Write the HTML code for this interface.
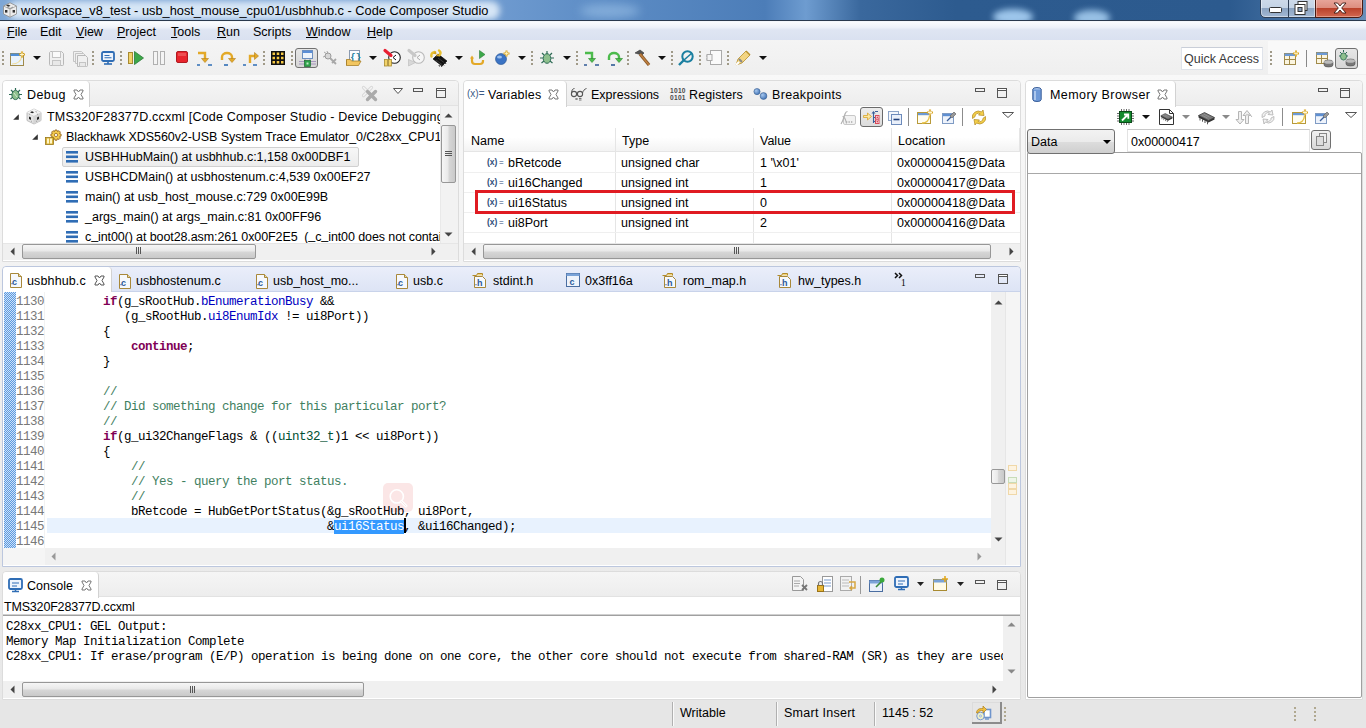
<!DOCTYPE html>
<html><head><meta charset="utf-8">
<style>
*{box-sizing:border-box}
html,body{margin:0;padding:0}
body{width:1366px;height:728px;overflow:hidden;position:relative;background:#f0f0f0;font-family:"Liberation Sans",sans-serif;font-size:12.5px;color:#000}
.a{position:absolute}
.t{position:absolute;white-space:pre;line-height:15px;margin-top:1px}
.m{font-family:"Liberation Mono",monospace;font-size:12.5px;letter-spacing:-.5px;margin-top:2px}
svg{position:absolute;overflow:visible}
.part{position:absolute;background:#fff;border:1px solid #dcdcdc;border-radius:4px 4px 0 0}
.part.act{border-color:#bcc7de}
.hdr{position:absolute;left:0;top:0;right:0;height:25px;background:linear-gradient(#f5f5f5,#ededed);border-bottom:1px solid #e2e2e2;border-radius:4px 4px 0 0}
.hdr.act{background:linear-gradient(#eaeefa,#dde4f5);border-bottom:1px solid #c9d3ea}
.tab{position:absolute;top:0;height:26px;background:#fff;border-right:1px solid #d2d2d2;border-radius:4px 4px 0 0}
.sb{position:absolute;background:#f0f0f0}
.thumb{position:absolute;background:linear-gradient(#f6f6f6 0%,#e9e9e9 45%,#d6d6d6 55%,#c9c9c9 100%);border:1px solid #979797;border-radius:2px}
</style></head><body>

<!-- TITLE BAR -->
<div class="a" style="left:0;top:0;width:1366px;height:20px;overflow:hidden;background:linear-gradient(90deg,#7ea7d6 0,#6f9bd0 36%,#5b8bc4 45%,#4c7db8 56%,#6e9cd0 59%,#3a689d 63%,#2d5b8f 70%,#2c5a8e 90%,#4f7aab 97%,#6a8fb9 100%)">
<div class="a" style="left:8px;top:1px;width:492px;height:19px;background:rgba(225,237,249,.9);border-radius:9px;filter:blur(3px)"></div>
<div class="a" style="left:993px;top:9px;width:40px;height:16px;background:rgba(170,210,245,.9);border-radius:50%;filter:blur(3px)"></div>
<div class="a" style="left:1074px;top:10px;width:36px;height:16px;background:rgba(170,210,245,.85);border-radius:50%;filter:blur(3px)"></div>
<div class="a" style="left:580px;top:4px;width:60px;height:14px;background:rgba(170,205,240,.5);border-radius:50%;filter:blur(5px)"></div>
</div>
<div class="a" style="left:0;top:20px;width:1366px;height:1px;background:#2b3a4e"></div>
<div class="a" style="left:0;top:21px;width:1366px;height:1px;background:#f4f7fb"></div>
<svg style="left:2px;top:2px" width="16" height="16" viewBox="0 0 16 16"><path d="M8 0.8l6.5 3.2v8l-6.5 3.2-6.5-3.2v-8z" fill="#ececec" stroke="#8a8a8a" stroke-width=".8"/><path d="M1.5 4l6.5 3.2 6.5-3.2M8 7.2v8" stroke="#a0a0a0" fill="none" stroke-width=".8"/><path d="M6 2.5l2.5 1.2-2 1-2.5-1.2z" fill="#333"/><rect x="3" y="8" width="2.4" height="2.6" fill="#333"/><rect x="10.6" y="8" width="2.4" height="2.6" fill="#333"/><path d="M5 5l3 1.5M11 5l-3 1.5" stroke="#666" stroke-width=".6"/></svg>
<div class="t" style="left:21px;top:2px;font-size:12.8px;color:#000">workspace_v8_test - usb_host_mouse_cpu01/usbhhub.c - Code Composer Studio</div>
<!-- window buttons -->
<div class="a" style="left:1260px;top:-3px;width:56px;height:21px;border:1px solid #2e3e54;border-radius:0 0 0 5px;background:linear-gradient(#cfdbea 0%,#c4d3e5 52%,#8aa2c0 53%,#a3b9d4 100%);box-shadow:inset 0 0 0 1px rgba(255,255,255,.45)"></div>
<div class="a" style="left:1288px;top:0;width:1px;height:17px;background:#2e3e54"></div>
<div class="a" style="left:1315px;top:-3px;width:48px;height:21px;border:1px solid #4a1a12;border-radius:0 0 5px 0;background:linear-gradient(#e9aaa0 0%,#dd8e80 50%,#b9402a 53%,#d26850 100%);box-shadow:inset 0 0 0 1px rgba(255,230,220,.4)"></div>
<svg style="left:1269px;top:7px" width="13" height="6" viewBox="0 0 13 6"><rect x="0.5" y="0.5" width="12" height="5" rx="1" fill="#fff" stroke="#333"/></svg>
<svg style="left:1294px;top:1px" width="14" height="14" viewBox="0 0 14 14"><rect x="4" y="0.5" width="9" height="9" fill="#fff" stroke="#333"/><rect x="1" y="3.5" width="10" height="10" fill="#fff" stroke="#333"/><rect x="4" y="6.5" width="4" height="4" fill="#8aa2c0" stroke="#333"/></svg>
<svg style="left:1333px;top:2px" width="14" height="12" viewBox="0 0 14 12"><path d="M1 1h3.5l2.5 3 2.5-3h3.5l-4.3 5 4.3 5h-3.5l-2.5-3-2.5 3h-3.5l4.3-5z" fill="#fff" stroke="#3a1a14" stroke-width=".9"/></svg>

<!-- MENU BAR -->
<div class="a" style="left:0;top:22px;width:1366px;height:19px;background:linear-gradient(#fbfcfe 0%,#eef2f9 30%,#dfe5f2 45%,#dae1f0 100%);border-bottom:1px solid #bcc5da"></div>
<div class="t" style="left:7px;top:24px"><u>F</u>ile</div>
<div class="t" style="left:40px;top:24px">Edit</div>
<div class="t" style="left:76px;top:24px"><u>V</u>iew</div>
<div class="t" style="left:117px;top:24px"><u>P</u>roject</div>
<div class="t" style="left:171px;top:24px"><u>T</u>ools</div>
<div class="t" style="left:217px;top:24px"><u>R</u>un</div>
<div class="t" style="left:253px;top:24px">Scripts</div>
<div class="t" style="left:306px;top:24px"><u>W</u>indow</div>
<div class="t" style="left:367px;top:24px"><u>H</u>elp</div>

<!-- TOOLBAR -->
<div class="a" style="left:0;top:40px;width:1366px;height:35px;background:linear-gradient(#f4f4f4,#efefef)"></div>
<div class="a" style="left:0;top:75px;width:1366px;height:625px;background:linear-gradient(#f8f8f8,#eeeeee 55%,#e8e8e8)"></div>
<div id="toolbar">
<div class="a" style="left:2px;top:51px;width:2px;height:2px;background:#a09a88;box-shadow:0 4px 0 #a09a88,0 8px 0 #a09a88,0 12px 0 #a09a88"></div>
<svg style="left:10px;top:51px" width="16" height="15" viewBox="0 0 16 15"><rect x="0.5" y="2.5" width="13" height="12" fill="#eaf3fc" stroke="#a08a4a"/><rect x="0.5" y="2.5" width="11" height="2.5" fill="#4f8ed6"/><path d="M2 13c6 0 9-3 10-8" stroke="#f0dc9a" stroke-width="1.2" fill="none"/><path d="M12 0.5v6M9 3.5h6" stroke="#d9a520" stroke-width="2.2"/><path d="M12 1.5v4M10 3.5h4" stroke="#fff5c8" stroke-width="1"/></svg>
<svg style="left:33px;top:56px" width="8" height="4" viewBox="0 0 8 4"><path d="M0 0h8l-4 4z" fill="#111"/></svg>
<svg style="left:49px;top:51px" width="15" height="15" viewBox="0 0 15 15"><path d="M1.5 0.5h11l2 2v11a1 1 0 0 1-1 1h-12a1 1 0 0 1-1-1v-12z" fill="#f0f0f0" stroke="#b8b8b8"/><rect x="3.5" y="0.5" width="8" height="6" fill="#fafafa" stroke="#c4c4c4"/><rect x="3.5" y="9.5" width="8" height="5" fill="#e8e8e8" stroke="#c4c4c4"/></svg>
<svg style="left:72px;top:51px" width="16" height="16" viewBox="0 0 16 16"><path d="M1.5 0.5h8l2 2v8h-10z" fill="#f0f0f0" stroke="#c4c4c4"/><path d="M3.5 2.5h8l2 2v8h-10z" fill="#f0f0f0" stroke="#c4c4c4"/><path d="M5.5 4.5h8l2 2v8a1 1 0 0 1-1 1h-9z" fill="#f0f0f0" stroke="#b8b8b8"/><rect x="7.5" y="11.5" width="6" height="4" fill="#e8e8e8" stroke="#c4c4c4"/></svg>
<div class="a" style="left:92px;top:51px;width:2px;height:2px;background:#a09a88;box-shadow:0 4px 0 #a09a88,0 8px 0 #a09a88,0 12px 0 #a09a88"></div>
<svg style="left:101px;top:51px" width="14" height="14" viewBox="0 0 14 14"><rect x="1" y="1" width="12" height="9" rx="1.5" fill="#eef4fc" stroke="#2f6db5" stroke-width="1.8"/><path d="M3.5 4.5h5M3.5 6.8h7" stroke="#2f6db5" stroke-width="1.1"/><path d="M3 13h8" stroke="#2f6db5" stroke-width="1.6"/><path d="M7 10v3" stroke="#2f6db5" stroke-width="1.6"/></svg>
<div class="a" style="left:120px;top:51px;width:2px;height:2px;background:#a09a88;box-shadow:0 4px 0 #a09a88,0 8px 0 #a09a88,0 12px 0 #a09a88"></div>
<svg style="left:128px;top:50px" width="16" height="15" viewBox="0 0 16 15"><rect x="0.5" y="2.5" width="4" height="11" fill="#f2d36a" stroke="#a88a30"/><path d="M6.5 1.5l9 6.5-9 6.5z" fill="#3da84a" stroke="#2a7a35" stroke-width=".8"/></svg>
<svg style="left:153px;top:51px" width="12" height="14" viewBox="0 0 12 14"><rect x="0.5" y="0.5" width="4" height="13" fill="#f4f4f4" stroke="#b0b0b0"/><rect x="7.5" y="0.5" width="4" height="13" fill="#f4f4f4" stroke="#b0b0b0"/></svg>
<svg style="left:176px;top:51px" width="12" height="12" viewBox="0 0 12 12"><rect x="0.5" y="0.5" width="11" height="11" rx="1.5" fill="#e8242c" stroke="#b01a20"/><rect x="2" y="2" width="8" height="3" fill="#f06a6a" opacity=".6"/></svg>
<svg style="left:196px;top:50px" width="17" height="17" viewBox="0 0 17 17"><path d="M2 3h7v6" stroke="#e3a928" stroke-width="2.4" fill="none"/><path d="M5.5 8.5h7l-3.5 4z" fill="#e3a928" stroke="#b5801a" stroke-width=".6"/><path d="M1 15h3M12 15h4" stroke="#2f6db5" stroke-width="1.6"/></svg>
<svg style="left:219px;top:50px" width="17" height="17" viewBox="0 0 17 17"><path d="M3 10V7a5 4 0 0 1 10 0v2" stroke="#e3a928" stroke-width="2.4" fill="none"/><path d="M9.5 8.5h7l-3.5 4z" fill="#e3a928" stroke="#b5801a" stroke-width=".6"/><path d="M5 15h4" stroke="#2f6db5" stroke-width="1.6"/></svg>
<svg style="left:242px;top:50px" width="17" height="17" viewBox="0 0 17 17"><path d="M8 13V6h5" stroke="#e3a928" stroke-width="2.4" fill="none"/><path d="M12.5 2.5v7l4-3.5z" fill="#e3a928" stroke="#b5801a" stroke-width=".6"/><path d="M1 15h3M11 15h4" stroke="#2f6db5" stroke-width="1.6"/></svg>
<div class="a" style="left:263px;top:51px;width:2px;height:2px;background:#a09a88;box-shadow:0 4px 0 #a09a88,0 8px 0 #a09a88,0 12px 0 #a09a88"></div>
<svg style="left:271px;top:51px" width="14" height="14" viewBox="0 0 14 14"><rect x="0" y="0" width="14" height="14" fill="#111"/><g fill="#f5c842"><rect x="1.5" y="1.5" width="2.5" height="2.5"/><rect x="5.75" y="1.5" width="2.5" height="2.5"/><rect x="10" y="1.5" width="2.5" height="2.5"/><rect x="1.5" y="5.75" width="2.5" height="2.5"/><rect x="5.75" y="5.75" width="2.5" height="2.5"/><rect x="10" y="5.75" width="2.5" height="2.5"/><rect x="1.5" y="10" width="2.5" height="2.5"/><rect x="5.75" y="10" width="2.5" height="2.5"/><rect x="10" y="10" width="2.5" height="2.5"/></g></svg>
<div class="a" style="left:291px;top:51px;width:2px;height:2px;background:#a09a88;box-shadow:0 4px 0 #a09a88,0 8px 0 #a09a88,0 12px 0 #a09a88"></div>
<div class="a" style="left:295px;top:48px;width:23px;height:20px;border:1px solid #707070;border-radius:3px;background:linear-gradient(#e6e6e6,#d6d6d6)"></div>
<svg style="left:299px;top:50px" width="17" height="17" viewBox="0 0 17 17"><rect x="3.5" y="0.5" width="10" height="8" fill="#eef4fb" stroke="#6c8fc0"/><rect x="4" y="1" width="9" height="2" fill="#5b8ed6"/><path d="M6 9v3M11 9v3" stroke="#8a8aa0" stroke-width=".8"/><path d="M0 11.5h17M0 14h17" stroke="#9a86b8" stroke-width=".8"/><rect x="5.5" y="10.5" width="6" height="6" fill="#2ea24a" stroke="#1a6a30" stroke-width=".7"/><rect x="7.5" y="12.5" width="2" height="2" fill="#bfe8c8"/></svg>
<svg style="left:322px;top:50px" width="16" height="17" viewBox="0 0 16 17"><path d="M2 2l3 2M1 7l3-1M5 1l1 3" stroke="#a8a8a8"/><circle cx="6" cy="6" r="3" fill="#d8d8d8" stroke="#9a9a9a"/><path d="M8 8l6 6M10 13l4-4" stroke="#a8a8a8" stroke-width="1.8"/></svg>
<svg style="left:346px;top:50px" width="16" height="16" viewBox="0 0 16 16"><rect x="3.5" y="0.5" width="10" height="11" fill="#fbfdff" stroke="#8a9ab0"/><text x="4.3" y="9.5" font-family="Liberation Mono" font-size="9" font-weight="bold" fill="#137a9a">{}</text><path d="M0.5 9.5h4l1 1.5h9.5l-2.5 4.5h-12z" fill="#f2c660" stroke="#a8802a" stroke-width=".8"/><path d="M0.5 9.5v6" stroke="#a8802a" stroke-width=".8"/></svg>
<svg style="left:369px;top:56px" width="8" height="4" viewBox="0 0 8 4"><path d="M0 0h8l-4 4z" fill="#111"/></svg>
<svg style="left:383px;top:49px" width="18" height="18" viewBox="0 0 18 18"><circle cx="11.5" cy="8.5" r="5.8" fill="#fff" stroke="#222" stroke-width="1.1"/><path d="M13 6l-3 2.5 3 2.5" stroke="#111" stroke-width="1" fill="none"/><path d="M2 1.5l6 5" stroke="#e81e30" stroke-width="3.2" stroke-linecap="round"/><rect x="1.5" y="10.5" width="3" height="6.5" fill="#f2d36a" stroke="#a88a30" stroke-width=".8"/><rect x="5.5" y="10.5" width="3" height="6.5" fill="#f2d36a" stroke="#a88a30" stroke-width=".8"/></svg>
<svg style="left:407px;top:49px" width="18" height="18" viewBox="0 0 18 18"><circle cx="11.5" cy="8.5" r="5.8" fill="#f6f6f6" stroke="#b8b8b8" stroke-width="1.1"/><path d="M13 6l-3 2.5 3 2.5" stroke="#aaa" stroke-width="1" fill="none"/><path d="M2 1.5l6 5" stroke="#c8c8c8" stroke-width="3.2" stroke-linecap="round"/><path d="M1.5 10.5l7 3-7 3.5z" fill="#d8d8d8" stroke="#bbb" stroke-width=".6"/></svg>
<svg style="left:430px;top:49px" width="18" height="18" viewBox="0 0 18 18"><path d="M3 10l5-5 9 7-5 5z" fill="#111" stroke="#000" stroke-width=".6"/><path d="M6 11l6 4.5M8 9l6 4.5" stroke="#555" stroke-width=".6"/><path d="M11 16.5l1 1.5M13 15l1 1.5M15 13.5l1 1.5M9 16l.5 1.5" stroke="#222" stroke-width=".9"/><path d="M1.5 7.5a3 3 0 0 1 2-4l1-.5M9 1.5a3 3 0 0 1 1 4l-.8.8" stroke="#e8c030" stroke-width="2.4" fill="none" stroke-linecap="round"/><path d="M3 4.5l3-2.5.5 3.5zM9 7l-3 .5 1.5-3z" fill="#d9a520"/></svg>
<svg style="left:455px;top:56px" width="8" height="4" viewBox="0 0 8 4"><path d="M0 0h8l-4 4z" fill="#111"/></svg>
<svg style="left:470px;top:49px" width="16" height="18" viewBox="0 0 16 18"><path d="M9.5 1.5v8l5.5-4z" fill="#3da84a" stroke="#2a7a35" stroke-width=".6"/><path d="M2 9v3a3 3 0 0 0 3 3h5a3 3 0 0 0 3-3v-1" stroke="#e3a928" stroke-width="2.2" fill="none"/><path d="M0 9.5h4l-2 -3z" fill="#e3a928"/></svg>
<svg style="left:495px;top:50px" width="15" height="15" viewBox="0 0 15 15"><circle cx="6" cy="9" r="5.5" fill="#3b73c4" stroke="#24508f" stroke-width=".6"/><ellipse cx="4.5" cy="7" rx="2.5" ry="1.5" fill="#9cc0ee"/><path d="M11.5 0.5v6M8.5 3.5h6" stroke="#d9a520" stroke-width="2"/><path d="M11.5 1.5v4M9.5 3.5h4" stroke="#fff5c8" stroke-width=".8"/></svg>
<svg style="left:518px;top:56px" width="8" height="4" viewBox="0 0 8 4"><path d="M0 0h8l-4 4z" fill="#111"/></svg>
<div class="a" style="left:531px;top:51px;width:2px;height:2px;background:#a09a88;box-shadow:0 4px 0 #a09a88,0 8px 0 #a09a88,0 12px 0 #a09a88"></div>
<svg style="left:539px;top:50px" width="16" height="16" viewBox="0 0 16 16"><g stroke="#2d6b55" stroke-width="1.2" fill="none"><path d="M3 3l2 2M13 3l-2 2M1 8h3M12 8h3M2.5 13l2.5-2M13.5 13l-2.5-2M8 1v3"/></g><ellipse cx="8" cy="8.5" rx="3.8" ry="4.8" fill="#8dbf8d" stroke="#2d6b55"/></svg>
<svg style="left:563px;top:56px" width="8" height="4" viewBox="0 0 8 4"><path d="M0 0h8l-4 4z" fill="#111"/></svg>
<div class="a" style="left:576px;top:51px;width:2px;height:2px;background:#a09a88;box-shadow:0 4px 0 #a09a88,0 8px 0 #a09a88,0 12px 0 #a09a88"></div>
<svg style="left:583px;top:50px" width="17" height="17" viewBox="0 0 17 17"><path d="M2 3h7v6" stroke="#4cbb4c" stroke-width="2.4" fill="none"/><path d="M5.5 8.5h7l-3.5 4z" fill="#4cbb4c" stroke="#2a8a2a" stroke-width=".6"/><path d="M1 15h3M12 15h4" stroke="#2f5a95" stroke-width="1.6"/></svg>
<svg style="left:606px;top:50px" width="17" height="17" viewBox="0 0 17 17"><path d="M3 10V7a5 4 0 0 1 10 0v2" stroke="#4cbb4c" stroke-width="2.4" fill="none"/><path d="M9.5 8.5h7l-3.5 4z" fill="#4cbb4c" stroke="#2a8a2a" stroke-width=".6"/><path d="M5 15h4" stroke="#2f5a95" stroke-width="1.6"/></svg>
<div class="a" style="left:627px;top:51px;width:2px;height:2px;background:#a09a88;box-shadow:0 4px 0 #a09a88,0 8px 0 #a09a88,0 12px 0 #a09a88"></div>
<svg style="left:634px;top:49px" width="16" height="18" viewBox="0 0 16 18"><path d="M1 4l5-3 4 3-2 2z" fill="#555" stroke="#333" stroke-width=".6"/><path d="M6 5l9 11" stroke="#8a5a2a" stroke-width="3.2"/><path d="M6 5l9 11" stroke="#c08040" stroke-width="1.4"/></svg>
<svg style="left:658px;top:56px" width="8" height="4" viewBox="0 0 8 4"><path d="M0 0h8l-4 4z" fill="#111"/></svg>
<div class="a" style="left:671px;top:51px;width:2px;height:2px;background:#a09a88;box-shadow:0 4px 0 #a09a88,0 8px 0 #a09a88,0 12px 0 #a09a88"></div>
<svg style="left:678px;top:50px" width="16" height="16" viewBox="0 0 16 16"><circle cx="9.5" cy="6.5" r="5.2" fill="none" stroke="#1a7fa0" stroke-width="2"/><path d="M6 10l8-7" stroke="#1a7fa0" stroke-width="1.6"/><path d="M6 10l-5 5" stroke="#1a7fa0" stroke-width="2.4"/></svg>
<div class="a" style="left:699px;top:51px;width:2px;height:2px;background:#a09a88;box-shadow:0 4px 0 #a09a88,0 8px 0 #a09a88,0 12px 0 #a09a88"></div>
<svg style="left:705px;top:50px" width="17" height="16" viewBox="0 0 17 16"><rect x="5.5" y="0.5" width="11" height="14" fill="#fafafa" stroke="#aaa"/><path d="M1 6h4l2-2M1 9h4l2 2" stroke="#aaa" fill="none"/><rect x="2" y="4.5" width="5" height="6" fill="#f4f4f4" stroke="#aaa"/></svg>
<div class="a" style="left:727px;top:51px;width:2px;height:2px;background:#a09a88;box-shadow:0 4px 0 #a09a88,0 8px 0 #a09a88,0 12px 0 #a09a88"></div>
<svg style="left:734px;top:49px" width="18" height="18" viewBox="0 0 18 18"><path d="M2 16l2-6 8-8 4 4-8 8z" fill="#f3d582" stroke="#b8912c" stroke-width=".8"/><path d="M5 10l3 3" stroke="#888" stroke-width="2"/><path d="M2 16l3-3" stroke="#fff" stroke-width="2"/><path d="M12 2l4 4" stroke="#b8912c" stroke-width="1.5"/></svg>
<svg style="left:759px;top:56px" width="8" height="4" viewBox="0 0 8 4"><path d="M0 0h8l-4 4z" fill="#111"/></svg>
<div class="a" style="left:1181px;top:47px;width:82px;height:23px;background:#fff;border:1px solid #dfe3ea;border-top-color:#c9ced8"></div>
<div class="t" style="left:1184px;top:51px;color:#3a3a3a">Quick Access</div>
<div class="a" style="left:1268px;top:41px;width:98px;height:33px;background:#f9f9f9"></div>
<div class="a" style="left:1270px;top:51px;width:2px;height:2px;background:#a09a88;box-shadow:0 4px 0 #a09a88,0 8px 0 #a09a88,0 12px 0 #a09a88"></div>
<svg style="left:1284px;top:50px" width="16" height="16" viewBox="0 0 16 16"><rect x="0.5" y="3.5" width="11" height="11" fill="#fbf5e0" stroke="#a08a4a"/><rect x="0.5" y="3.5" width="11" height="2.5" fill="#6c9ad6"/><path d="M0.5 9.5h11M5.5 6v8.5" stroke="#a08a4a"/><path d="M12 0.5v6M9 3.5h6" stroke="#d9a520" stroke-width="2"/><path d="M12 1.5v4M10 3.5h4" stroke="#fff5c8" stroke-width=".8"/></svg>
<div class="a" style="left:1306px;top:50px;width:1px;height:17px;background:#888"></div>
<svg style="left:1316px;top:52px" width="17" height="15" viewBox="0 0 17 15"><rect x="0.5" y="0.5" width="11" height="11" fill="#fbf5e0" stroke="#a08a4a"/><rect x="0.5" y="0.5" width="11" height="2.5" fill="#6c9ad6"/><path d="M0.5 6.5h11M5.5 3v8.5" stroke="#a08a4a"/><path d="M8 10a4.5 2 0 0 1 9 0v3a4.5 2 0 0 1-9 0z" fill="#777" stroke="#555" stroke-width=".6"/><ellipse cx="12.5" cy="10" rx="4.5" ry="1.8" fill="#bbb"/></svg>
<div class="a" style="left:1335px;top:48px;width:23px;height:21px;border:1px solid #707070;border-radius:3px;background:linear-gradient(#e6e6e6,#d6d6d6)"></div>
<svg style="left:1338px;top:50px" width="18" height="17" viewBox="0 0 18 17"><g stroke="#2d6b55" stroke-width="1" fill="none"><path d="M2 2l2 2M9 2l-2 2M1 6h2M8 6h2M5.5 0v2"/></g><ellipse cx="5.5" cy="6.5" rx="3" ry="3.6" fill="#8dbf8d" stroke="#2d6b55" stroke-width=".8"/><path d="M8 11a4.5 2 0 0 1 9 0v3a4.5 2 0 0 1-9 0z" fill="#777" stroke="#555" stroke-width=".6"/><ellipse cx="12.5" cy="11" rx="4.5" ry="1.8" fill="#bbb"/></svg>
</div>

<!-- DEBUG PART -->
<div class="part" style="left:2px;top:80px;width:457px;height:182px">
  <div class="hdr"></div>
  <div class="tab" style="left:0;width:87px"></div>
</div>
<div id="debug">
<!-- bug icon -->
<svg style="left:8px;top:87px" width="15" height="15" viewBox="0 0 15 15"><g stroke="#2d6b55" stroke-width="1.2" fill="none"><path d="M3 3l2 2M12 3l-2 2M1 7.5h3M11 7.5h3M2.5 12l2.5-2M12.5 12l-2.5-2M7.5 1v2"/></g><ellipse cx="7.5" cy="8" rx="3.6" ry="4.6" fill="#8dbf8d" stroke="#2d6b55" stroke-width="1"/><path d="M6 6l3 4" stroke="#cfe8cf" stroke-width="1"/></svg>
<div class="t" style="left:27px;top:87px;letter-spacing:.4px">Debug</div>
<svg style="left:73px;top:89px" width="11" height="11" viewBox="0 0 11 11"><path d="M1 1l3 0 1.5 2 1.5-2h3v1l-2 3.5 2 3.5v1h-3l-1.5-2-1.5 2h-3v-1l2-3.5-2-3.5z" fill="#fff" stroke="#777" stroke-width="1"/></svg>
<!-- view toolbar: disconnect, menu, min, max -->
<svg style="left:361px;top:85px" width="18" height="18" viewBox="0 0 18 18"><path d="M2.5 2.5l8 8M10.5 2.5l-8 8" stroke="#d8d8d8" stroke-width="3.2" stroke-linecap="round"/><path d="M2.5 2.5l8 8M10.5 2.5l-8 8" stroke="#f4f4f4" stroke-width="1.4" stroke-linecap="round"/><path d="M6.5 6.5l8 8M14.5 6.5l-8 8" stroke="#ababab" stroke-width="3.4" stroke-linecap="round"/></svg>
<svg style="left:393px;top:88px" width="10" height="6" viewBox="0 0 10 6"><path d="M0.5 0.5h9l-4.5 5z" fill="#fff" stroke="#555"/></svg>
<div class="a" style="left:413px;top:88px;width:10px;height:4px;border:1px solid #555"></div>
<div class="a" style="left:436px;top:88px;width:10px;height:10px;border:1px solid #555;box-shadow:inset 0 1px 0 #fff,inset 0 2px 0 #555"></div>
<!-- tree -->
<div id="dtree" class="a" style="left:0;top:0;width:1366px;height:728px;clip-path:inset(106px 926px 485px 3px)">
<svg style="left:13px;top:114px" width="6" height="6" viewBox="0 0 6 6"><path d="M5.8 0.2v5.6h-5.6z" fill="#333"/></svg>
<svg style="left:26px;top:108px" width="16" height="17" viewBox="0 0 16 17"><path d="M8 1l7 3.5v8l-7 3.5-7-3.5v-8z" fill="#e4e4e4" stroke="#b0b0b0" stroke-width=".8"/><path d="M1 4.5l7 3.5 7-3.5" fill="none" stroke="#c8c8c8" stroke-width=".8"/><path d="M8 8v8" stroke="#c8c8c8" stroke-width=".8"/><path d="M1 4.5l7-3.5 7 3.5-7 3.5z" fill="#f4f4f4"/><path d="M8 8v8l7-3.5v-8z" fill="#d4d4d4"/><path d="M6 3.2l2.2 1.1-2 1-2.2-1.1z" fill="#222"/><path d="M3 8.5l2 1v2.4l-2-1z" fill="#222"/><path d="M11 9.5l2-1v2.4l-2 1z" fill="#222"/><path d="M9.5 3.5l1.5.7M3 6l1 .5M12 6l-1 .5M5 13l1 .5M11 13l-1 .5" stroke="#888" stroke-width=".7"/></svg>
<div class="t" style="left:47px;top:109px;letter-spacing:.21px">TMS320F28377D.ccxml [Code Composer Studio - Device Debugging]</div>
<svg style="left:32px;top:134px" width="6" height="6" viewBox="0 0 6 6"><path d="M5.8 0.2v5.6h-5.6z" fill="#333"/></svg>
<svg style="left:45px;top:130px" width="17" height="15" viewBox="0 0 17 15"><g transform="translate(11,5)"><path d="M-1 -5h2l.5 1.5 1.5-.8 1.4 1.4-.8 1.5 1.5.5v2l-1.5.5.8 1.5-1.4 1.4-1.5-.8-.5 1.5h-2l-.5-1.5-1.5.8-1.4-1.4.8-1.5-1.5-.5v-2l1.5-.5-.8-1.5 1.4-1.4 1.5.8z" fill="#f2c94c" stroke="#8a5a1a" stroke-width=".8"/><circle r="1.6" fill="#fff" stroke="#8a5a1a" stroke-width=".7"/></g><rect x="0.5" y="7.5" width="8" height="7" fill="#d9b23a" stroke="#9a7818" stroke-width=".8"/><rect x="2" y="8.5" width="2" height="5" fill="#fff6c8"/><rect x="5" y="8.5" width="2" height="5" fill="#fff6c8"/></svg>
<div class="t" style="left:66px;top:129px;letter-spacing:-.07px">Blackhawk XDS560v2-USB System Trace Emulator_0/C28xx_CPU1 (Suspended)</div>
<div class="a" style="left:62px;top:147px;width:297px;height:20px;background:linear-gradient(#f7f7f7,#ececec);border:1px solid #d0d0d0;border-radius:2px"></div>
<svg style="left:66px;top:151px" width="12" height="12" viewBox="0 0 12 12"><rect x="0" y="0" width="12" height="2.6" fill="#2f6db5"/><rect x="0" y="4.5" width="12" height="2.6" fill="#2f6db5"/><rect x="0" y="9" width="12" height="2.6" fill="#2f6db5"/></svg>
<div class="t" style="left:85px;top:149px">USBHHubMain() at usbhhub.c:1,158 0x00DBF1</div>
<svg style="left:66px;top:171px" width="12" height="12" viewBox="0 0 12 12"><rect x="0" y="0" width="12" height="2.6" fill="#2f6db5"/><rect x="0" y="4.5" width="12" height="2.6" fill="#2f6db5"/><rect x="0" y="9" width="12" height="2.6" fill="#2f6db5"/></svg>
<div class="t" style="left:85px;top:169px">USBHCDMain() at usbhostenum.c:4,539 0x00EF27</div>
<svg style="left:66px;top:191px" width="12" height="12" viewBox="0 0 12 12"><rect x="0" y="0" width="12" height="2.6" fill="#2f6db5"/><rect x="0" y="4.5" width="12" height="2.6" fill="#2f6db5"/><rect x="0" y="9" width="12" height="2.6" fill="#2f6db5"/></svg>
<div class="t" style="left:85px;top:189px">main() at usb_host_mouse.c:729 0x00E99B</div>
<svg style="left:66px;top:211px" width="12" height="12" viewBox="0 0 12 12"><rect x="0" y="0" width="12" height="2.6" fill="#2f6db5"/><rect x="0" y="4.5" width="12" height="2.6" fill="#2f6db5"/><rect x="0" y="9" width="12" height="2.6" fill="#2f6db5"/></svg>
<div class="t" style="left:85px;top:209px">_args_main() at args_main.c:81 0x00FF96</div>
<svg style="left:66px;top:231px" width="12" height="12" viewBox="0 0 12 12"><rect x="0" y="0" width="12" height="2.6" fill="#2f6db5"/><rect x="0" y="4.5" width="12" height="2.6" fill="#2f6db5"/><rect x="0" y="9" width="12" height="2.6" fill="#2f6db5"/></svg>
<div class="t" style="left:85px;top:229px;letter-spacing:-.1px">c<span style="position:relative;top:-2px">_</span>int00() at boot28.asm:261 0x00F2E5  (<span style="position:relative;top:-2px">_</span>c<span style="position:relative;top:-2px">_</span>int00 does not contain frame information)</div>
</div>
<!-- debug vscroll -->
<div class="sb" style="left:440px;top:106px;width:18px;height:137px;background:#f2f2f2;border-left:1px solid #e9e9e9"></div>
<svg style="left:444px;top:113px" width="9" height="5" viewBox="0 0 9 5"><path d="M0.5 4.5l4-4 4 4z" fill="#444"/></svg>
<div class="thumb" style="left:441px;top:125px;width:15px;height:58px;background:linear-gradient(90deg,#f6f6f6 0%,#e9e9e9 45%,#d6d6d6 55%,#c9c9c9 100%)"></div>
<div class="a" style="left:445px;top:151px;width:7px;height:1px;background:#555;box-shadow:0 2px 0 #555,0 4px 0 #555"></div>
<svg style="left:444px;top:232px" width="9" height="5" viewBox="0 0 9 5"><path d="M0.5 0.5l4 4 4-4z" fill="#444"/></svg>
<!-- debug hscroll -->
<div class="sb" style="left:3px;top:243px;width:455px;height:17px;border-top:1px solid #e6e6e6"></div>
<svg style="left:10px;top:247px" width="5" height="9" viewBox="0 0 5 9"><path d="M4.5 0.5l-4 4 4 4z" fill="#444"/></svg>
<div class="thumb" style="left:22px;top:244px;width:234px;height:15px"></div>
<div class="a" style="left:136px;top:247px;width:1px;height:7px;background:#555;box-shadow:2px 0 0 #555,4px 0 0 #555"></div>
<svg style="left:431px;top:247px" width="5" height="9" viewBox="0 0 5 9"><path d="M0.5 0.5l4 4-4 4z" fill="#444"/></svg>
</div>
</div>

<!-- VARIABLES PART -->
<div class="part" style="left:463px;top:80px;width:558px;height:182px">
  <div class="hdr"></div>
  <div class="tab" style="left:0;width:103px"></div>
</div>
<div id="vars">
<svg style="left:467px;top:88px" width="18" height="11" viewBox="0 0 18 11"><text x="0" y="9" font-family="Liberation Sans" font-size="10" fill="#3b5a85">(x)=</text></svg>
<div class="t" style="left:488px;top:87px;letter-spacing:.27px">Variables</div>
<svg style="left:548px;top:89px" width="11" height="11" viewBox="0 0 11 11"><path d="M1 1l3 0 1.5 2 1.5-2h3v1l-2 3.5 2 3.5v1h-3l-1.5-2-1.5 2h-3v-1l2-3.5-2-3.5z" fill="#fff" stroke="#777" stroke-width="1"/></svg>
<svg style="left:570px;top:88px" width="18" height="13" viewBox="0 0 18 13"><circle cx="4" cy="6" r="2.6" fill="none" stroke="#555" stroke-width="1.1"/><circle cx="10" cy="6" r="2.6" fill="none" stroke="#555" stroke-width="1.1"/><path d="M1.5 5.5c0-3 1-5 3-5M12.5 5c.5-2 2-4 4-4.5" stroke="#555" stroke-width="1" fill="none"/><path d="M6.6 6h.8" stroke="#555"/><path d="M5.5 10l2 2M7.5 10l-2 2M9 10.5h2.5M9 12h2.5" stroke="#555" stroke-width=".8"/></svg>
<div class="t" style="left:591px;top:87px">Expressions</div>
<svg style="left:670px;top:88px" width="16" height="12" viewBox="0 0 16 12"><text x="0" y="5.3" font-family="Liberation Sans" font-size="6.6" font-weight="bold" fill="#4a4a4a" textLength="15.5">1010</text><text x="0" y="11.6" font-family="Liberation Sans" font-size="6.6" font-weight="bold" fill="#4a4a4a" textLength="15.5">0101</text></svg>
<div class="t" style="left:689px;top:87px;letter-spacing:.13px">Registers</div>
<svg style="left:753px;top:88px" width="15" height="13" viewBox="0 0 15 13"><defs><radialGradient id="bpg" cx=".35" cy=".35" r=".7"><stop offset="0" stop-color="#a8c8ee"/><stop offset="1" stop-color="#3f72b5"/></radialGradient></defs><circle cx="4" cy="3.6" r="3.1" fill="url(#bpg)" stroke="#3a5f90" stroke-width=".6"/><circle cx="10.5" cy="8" r="3.4" fill="url(#bpg)" stroke="#3a5f90" stroke-width=".6"/></svg>
<div class="t" style="left:772px;top:87px;letter-spacing:.36px">Breakpoints</div>
<div class="a" style="left:975px;top:88px;width:10px;height:4px;border:1px solid #555"></div>
<div class="a" style="left:997px;top:88px;width:10px;height:10px;border:1px solid #555;box-shadow:inset 0 1px 0 #fff,inset 0 2px 0 #555"></div>
<!-- view toolbar -->
<svg style="left:840px;top:110px" width="16" height="16" viewBox="0 0 16 16"><rect x="3.5" y="5.5" width="12" height="9" rx="1.5" fill="#f2f2f2" stroke="#c8c8c8"/><path d="M6 12h1.3M8.5 12h1.3M11 12h1.3" stroke="#aaa" stroke-width="1.3"/><path d="M1 14c2-3 3-7 4-10 .5-1.5 1.5-2.5 2.5-2.5M2.5 6.5c2 0 3 2 4 7" stroke="#b0b0b0" stroke-width="1.2" fill="none"/></svg>
<div class="a" style="left:860px;top:107px;width:23px;height:20px;border:1px solid #6a6a6a;border-radius:3px;background:linear-gradient(#ececec,#dcdcdc)"></div>
<svg style="left:863px;top:110px" width="17" height="14" viewBox="0 0 17 14"><path d="M0.5 5.5h4v-2.5l4 3.5-4 3.5v-2.5h-4z" fill="#fbe7a0" stroke="#d9a52a" stroke-width=".8"/><path d="M10.5 3v10M10.5 7.5h2M10.5 11.5h2" stroke="#3a5f9a" stroke-width="1.1" fill="none"/><path d="M8.5 3.5l2-2.5 2 2.5z" fill="#3a5f9a"/><path d="M12 1.5h3" stroke="#3a5f9a"/><rect x="12.5" y="5.5" width="3.5" height="3.5" fill="#fff" stroke="#d84a5a"/><rect x="12.5" y="10" width="3.5" height="3.5" fill="#fff" stroke="#d84a5a"/><rect x="13.5" y="6.5" width="1.5" height="1.5" fill="#d84a5a"/><rect x="13.5" y="11" width="1.5" height="1.5" fill="#d84a5a"/></svg>
<svg style="left:888px;top:111px" width="14" height="14" viewBox="0 0 14 14"><rect x="0.5" y="0.5" width="10" height="9" fill="#f4f7fc" stroke="#8ea5c8"/><rect x="3.5" y="3.5" width="10" height="10" fill="#eaf0fa" stroke="#6d8bbb"/><path d="M5.5 8.5h6" stroke="#1f3f7a" stroke-width="1.6"/></svg>
<div class="a" style="left:908px;top:108px;width:1px;height:18px;background:#8c8c8c"></div>
<svg style="left:917px;top:109px" width="17" height="16" viewBox="0 0 17 16"><rect x="0.5" y="3.5" width="13" height="11" fill="#fffdf2" stroke="#b89a3a"/><rect x="1" y="4" width="12" height="2.2" fill="#6c9ad6"/><path d="M5 14c5 0 7-3 7.5-7" stroke="#e8c248" stroke-width="1.4" fill="none"/><path d="M13 0.5v6M10 3.5h6" stroke="#d9a52a" stroke-width="2.2"/><path d="M13 1.5v4M11 3.5h4" stroke="#fff8d0" stroke-width="1"/></svg>
<svg style="left:942px;top:110px" width="15" height="15" viewBox="0 0 15 15"><rect x="0.5" y="3.5" width="11" height="10" fill="#eef3fb" stroke="#7f9bc4"/><rect x="1" y="4" width="10" height="2.2" fill="#5e8fd2"/><path d="M5 11l4-4" stroke="#3a5f9a" stroke-width="1.2"/><path d="M8 6l4-4 2 2-4 4z" fill="#9a9a9a" stroke="#6a6a6a" stroke-width=".7"/></svg>
<div class="a" style="left:962px;top:108px;width:1px;height:18px;background:#8c8c8c"></div>
<svg style="left:970px;top:109px" width="18" height="17" viewBox="0 0 18 17"><path d="M2.5 9.5a6 6 0 0 1 9-6.5l1.5-2 1 5.5-5.5-.5 1.5-1.5a3.5 3.5 0 0 0-5 3.2z" fill="#f5d04a" stroke="#b8912c" stroke-width=".8"/><path d="M15.5 7.5a6 6 0 0 1-9 6.5l-1.5 2-1-5.5 5.5.5-1.5 1.5a3.5 3.5 0 0 0 5-3.2z" fill="#f5d04a" stroke="#b8912c" stroke-width=".8"/></svg>
<svg style="left:1002px;top:112px" width="12" height="6" viewBox="0 0 12 6"><path d="M0.5 0.5h11l-5.5 5z" fill="#fff" stroke="#555"/></svg>
<!-- table -->
<div class="a" style="left:464px;top:128px;width:556px;height:24px;background:linear-gradient(#fff 0%,#fff 40%,#f3f3f3 100%);border-bottom:1px solid #e5e5e5"></div>
<div class="a" style="left:615px;top:128px;width:1px;height:115px;background:#e5e5e5"></div>
<div class="a" style="left:753px;top:128px;width:1px;height:115px;background:#e5e5e5"></div>
<div class="a" style="left:891px;top:128px;width:1px;height:115px;background:#e5e5e5"></div>
<div class="a" style="left:1019px;top:128px;width:1px;height:24px;background:#e5e5e5"></div>
<div class="t" style="left:471px;top:133px">Name</div><div class="t" style="left:622px;top:133px">Type</div><div class="t" style="left:760px;top:133px">Value</div><div class="t" style="left:898px;top:133px">Location</div>
<div class="a" style="left:464px;top:172px;width:556px;height:1px;background:#efefef"></div>
<div class="a" style="left:464px;top:192px;width:556px;height:1px;background:#efefef"></div>
<div class="a" style="left:464px;top:212px;width:556px;height:1px;background:#efefef"></div>
<div class="a" style="left:464px;top:232px;width:556px;height:1px;background:#efefef"></div>
<svg style="left:487px;top:156px" width="17" height="11" viewBox="0 0 17 11"><text x="0" y="8.5" font-family="Liberation Sans" font-size="8.5" font-weight="bold" fill="#2e4d7a">(x)</text><text x="12" y="8.5" font-family="Liberation Sans" font-size="8" fill="#2e4d7a">=</text></svg><div class="t" style="left:508px;top:155px">bRetcode</div><div class="t" style="left:621px;top:155px">unsigned char</div><div class="t" style="left:760px;top:155px">1 '\x01'</div><div class="t" style="left:897px;top:155px">0x00000415@Data</div>
<svg style="left:487px;top:176px" width="17" height="11" viewBox="0 0 17 11"><text x="0" y="8.5" font-family="Liberation Sans" font-size="8.5" font-weight="bold" fill="#2e4d7a">(x)</text><text x="12" y="8.5" font-family="Liberation Sans" font-size="8" fill="#2e4d7a">=</text></svg><div class="t" style="left:508px;top:175px">ui16Changed</div><div class="t" style="left:621px;top:175px">unsigned int</div><div class="t" style="left:760px;top:175px">1</div><div class="t" style="left:897px;top:175px">0x00000417@Data</div>
<svg style="left:487px;top:196px" width="17" height="11" viewBox="0 0 17 11"><text x="0" y="8.5" font-family="Liberation Sans" font-size="8.5" font-weight="bold" fill="#2e4d7a">(x)</text><text x="12" y="8.5" font-family="Liberation Sans" font-size="8" fill="#2e4d7a">=</text></svg><div class="t" style="left:508px;top:195px">ui16Status</div><div class="t" style="left:621px;top:195px">unsigned int</div><div class="t" style="left:760px;top:195px">0</div><div class="t" style="left:897px;top:195px">0x00000418@Data</div>
<svg style="left:487px;top:216px" width="17" height="11" viewBox="0 0 17 11"><text x="0" y="8.5" font-family="Liberation Sans" font-size="8.5" font-weight="bold" fill="#2e4d7a">(x)</text><text x="12" y="8.5" font-family="Liberation Sans" font-size="8" fill="#2e4d7a">=</text></svg><div class="t" style="left:508px;top:215px">ui8Port</div><div class="t" style="left:621px;top:215px">unsigned int</div><div class="t" style="left:760px;top:215px">2</div><div class="t" style="left:897px;top:215px">0x00000416@Data</div>

<div class="a" style="left:475px;top:190px;width:540px;height:24px;border:3px solid #e01b22"></div>
<!-- hscroll -->
<div class="sb" style="left:464px;top:243px;width:556px;height:17px;border-top:1px solid #e6e6e6"></div>
<svg style="left:471px;top:247px" width="5" height="9" viewBox="0 0 5 9"><path d="M4.5 0.5l-4 4 4 4z" fill="#444"/></svg>
<div class="thumb" style="left:483px;top:244px;width:508px;height:15px"></div>
<div class="a" style="left:734px;top:247px;width:1px;height:7px;background:#555;box-shadow:2px 0 0 #555,4px 0 0 #555"></div>
<svg style="left:1009px;top:247px" width="5" height="9" viewBox="0 0 5 9"><path d="M0.5 0.5l4 4-4 4z" fill="#444"/></svg>
</div>

<!-- MEMORY PART -->
<div class="part" style="left:1025px;top:80px;width:338px;height:620px">
  <div class="hdr"></div>
  <div class="tab" style="left:0;width:150px"></div>
</div>
<div id="memory">
<svg style="left:1032px;top:87px" width="10" height="15" viewBox="0 0 10 15"><ellipse cx="5" cy="2.5" rx="4.2" ry="2" fill="#a9c4ec" stroke="#3a5f9a"/><path d="M0.8 2.5v10a4.2 2 0 0 0 8.4 0v-10" fill="#6f9ad8" stroke="#3a5f9a"/><path d="M3 4v9" stroke="#cfe0f8" stroke-width="1.3"/></svg>
<div class="t" style="left:1050px;top:87px;letter-spacing:.42px">Memory Browser</div>
<svg style="left:1157px;top:89px" width="11" height="11" viewBox="0 0 11 11"><path d="M1 1l3 0 1.5 2 1.5-2h3v1l-2 3.5 2 3.5v1h-3l-1.5-2-1.5 2h-3v-1l2-3.5-2-3.5z" fill="#fff" stroke="#777" stroke-width="1"/></svg>
<div class="a" style="left:1318px;top:88px;width:10px;height:4px;border:1px solid #555"></div>
<div class="a" style="left:1340px;top:88px;width:10px;height:10px;border:1px solid #555;box-shadow:inset 0 1px 0 #fff,inset 0 2px 0 #555"></div>
<!-- toolbar -->
<svg style="left:1117px;top:109px" width="17" height="16" viewBox="0 0 17 16"><g stroke="#6a6a6a" stroke-width="1"><path d="M4.5 0v3M7 0v3M9.5 0v3M12 0v3M4.5 13v3M7 13v3M9.5 13v3M12 13v3M0 4.5h3M0 7h3M0 9.5h3M0 12h3M14 4.5h3M14 7h3M14 9.5h3M14 12h3"/></g><rect x="2.5" y="2.5" width="12" height="11" fill="#138a2e" stroke="#0a4a18"/><path d="M5 11.5l6-6M7 5.5h4.3v4.3" stroke="#fff" stroke-width="1.8" fill="none"/></svg>
<svg style="left:1142px;top:115px" width="8" height="4" viewBox="0 0 8 4"><path d="M0 0h8l-4 4z" fill="#111"/></svg>
<svg style="left:1159px;top:109px" width="15" height="16" viewBox="0 0 15 16"><path d="M0.5 0.5h10l4 4v11h-14z" fill="#fff" stroke="#333"/><path d="M10.5 0.5v4h4" fill="none" stroke="#333"/><g transform="translate(1.5,2) scale(.72)"><path d="M0.5 6.5l6-3 10 5-6 3z" fill="#7a7a7a" stroke="#333" stroke-width=".7"/><path d="M0.5 6.5v2l10 5 6-3v-2l-6 3z" fill="#333"/><path d="M2 9v2.5M4.5 10.2v2.5M7 11.5v2.5M9.5 12.8v2.5" stroke="#555" stroke-width="1"/><path d="M3.5 6l6 3M5.5 5l6 3" stroke="#a0a0a0" stroke-width=".6"/></g></svg>
<svg style="left:1182px;top:115px" width="8" height="4" viewBox="0 0 8 4"><path d="M0 0h8l-4 4z" fill="#8a8a8a"/></svg>
<svg style="left:1198px;top:109px" width="17" height="17" viewBox="0 0 17 17"><path d="M0.5 6.5l6-3 10 5-6 3z" fill="#7a7a7a" stroke="#333" stroke-width=".7"/><path d="M0.5 6.5v2l10 5 6-3v-2l-6 3z" fill="#333"/><path d="M2 9v2.5M4.5 10.2v2.5M7 11.5v2.5M9.5 12.8v2.5" stroke="#555" stroke-width="1"/><path d="M3.5 6l6 3M5.5 5l6 3" stroke="#a0a0a0" stroke-width=".6"/></svg>
<svg style="left:1222px;top:115px" width="8" height="4" viewBox="0 0 8 4"><path d="M0 0h8l-4 4z" fill="#8a8a8a"/></svg>
<svg style="left:1237px;top:109px" width="16" height="16" viewBox="0 0 16 16"><path d="M1.5 2.5h3v8h2.5l-4 4.5-4-4.5h2.5z" fill="#f0f0f0" stroke="#b5b5b5"/><path d="M8.5 14.5v-8h-2.5l4-5 4 5h-2.5v8z" fill="#f0f0f0" stroke="#b5b5b5"/><path d="M9 6a5 4 0 0 1 6 2" stroke="#bbb" fill="none"/></svg>
<svg style="left:1260px;top:109px" width="16" height="16" viewBox="0 0 16 16"><path d="M2 8.5a5.5 5.5 0 0 1 8.5-5.5l1.5-2 1 5-5-.5 1.5-1.5a3 3 0 0 0-4.5 3z" fill="#f2f2f2" stroke="#b0b0b0" stroke-width=".8"/><path d="M14 7.5a5.5 5.5 0 0 1-8.5 5.5l-1.5 2-1-5 5 .5-1.5 1.5a3 3 0 0 0 4.5-3z" fill="#f2f2f2" stroke="#b0b0b0" stroke-width=".8"/></svg>
<div class="a" style="left:1282px;top:108px;width:1px;height:18px;background:#8c8c8c"></div>
<svg style="left:1292px;top:109px" width="17" height="16" viewBox="0 0 17 16"><rect x="0.5" y="3.5" width="13" height="11" fill="#fffdf2" stroke="#b89a3a"/><rect x="1" y="4" width="12" height="2.2" fill="#6c9ad6"/><path d="M5 14c5 0 7-3 7.5-7" stroke="#e8c248" stroke-width="1.4" fill="none"/><path d="M13 0.5v6M10 3.5h6" stroke="#d9a52a" stroke-width="2.2"/><path d="M13 1.5v4M11 3.5h4" stroke="#fff8d0" stroke-width="1"/></svg>
<svg style="left:1315px;top:110px" width="15" height="15" viewBox="0 0 15 15"><rect x="0.5" y="3.5" width="11" height="10" fill="#eef3fb" stroke="#7f9bc4"/><rect x="1" y="4" width="10" height="2.2" fill="#5e8fd2"/><path d="M5 11l4-4" stroke="#3a5f9a" stroke-width="1.2"/><path d="M8 6l4-4 2 2-4 4z" fill="#9a9a9a" stroke="#6a6a6a" stroke-width=".7"/></svg>
<svg style="left:1345px;top:112px" width="12" height="6" viewBox="0 0 12 6"><path d="M0.5 0.5h11l-5.5 5z" fill="#fff" stroke="#555"/></svg>
<!-- address -->
<div class="a" style="left:1127px;top:129px;width:183px;height:23px;border:1px solid #e3e3e3;border-top-color:#c8c8c8;background:#fff"></div>
<div class="t" style="left:1131px;top:134px">0x00000417</div>
<div class="a" style="left:1311px;top:130px;width:20px;height:20px;border:1px solid #707070;border-radius:3px;background:linear-gradient(#f2f2f2,#d8d8d8)"></div>
<svg style="left:1315px;top:133px" width="13" height="13" viewBox="0 0 13 13"><rect x="4.5" y="0.5" width="7" height="9" fill="#eee" stroke="#888"/><rect x="1.5" y="3.5" width="7" height="9" fill="#ddd" stroke="#888"/></svg>
<!-- table -->
<div class="a" style="left:1027px;top:152px;width:335px;height:546px;border:1px solid #a0a0a0;border-radius:2px;background:#fff"></div>
<div class="a" style="left:1028px;top:173px;width:333px;height:1px;background:#a8a8a8"></div>
<!-- combo -->
<div class="a" style="left:1027px;top:129px;width:88px;height:25px;border:1px solid #707070;border-radius:3px;background:linear-gradient(#f2f2f2 0%,#ebebeb 50%,#dddddd 51%,#cfcfcf 100%)"></div>
<div class="t" style="left:1031px;top:134px">Data</div>
<svg style="left:1103px;top:140px" width="8" height="4" viewBox="0 0 8 4"><path d="M0 0h8l-4 4z" fill="#000"/></svg>

</div>

<!-- EDITOR PART -->
<div class="part act" style="left:2px;top:266px;width:1019px;height:301px">
  <div class="hdr act"></div>
  <div class="tab" style="left:0;width:109px"></div>
</div>
<div id="editor">
<svg style="left:10px;top:273px" width="12" height="15" viewBox="0 0 12 15"><path d="M0.5 0.5h8l3 3v11h-11z" fill="#f6f8fc" stroke="#a8883a"/><path d="M8.5 0.5v3h3" fill="#e8d8a8" stroke="#a8883a"/><text x="2" y="12" font-family="Liberation Sans" font-size="9" font-weight="bold" fill="#2b5a9a">c</text><rect x="1.5" y="10" width="1" height="1.3" fill="#2b5a9a"/></svg>
<div class="t" style="left:27px;top:273px;letter-spacing:.13px">usbhhub.c</div>
<svg style="left:94px;top:275px" width="11" height="11" viewBox="0 0 11 11"><path d="M1 1l3 0 1.5 2 1.5-2h3v1l-2 3.5 2 3.5v1h-3l-1.5-2-1.5 2h-3v-1l2-3.5-2-3.5z" fill="#fff" stroke="#555" stroke-width="1"/></svg>
<svg style="left:119px;top:274px" width="12" height="15" viewBox="0 0 12 15"><path d="M0.5 0.5h8l3 3v11h-11z" fill="#f6f8fc" stroke="#a8883a"/><path d="M8.5 0.5v3h3" fill="#e8d8a8" stroke="#a8883a"/><text x="2" y="12" font-family="Liberation Sans" font-size="9" font-weight="bold" fill="#2b5a9a">c</text><rect x="1.5" y="10" width="1" height="1.3" fill="#2b5a9a"/></svg><div class="t" style="left:136px;top:273px">usbhostenum.c</div>
<svg style="left:256px;top:274px" width="12" height="15" viewBox="0 0 12 15"><path d="M0.5 0.5h8l3 3v11h-11z" fill="#f6f8fc" stroke="#a8883a"/><path d="M8.5 0.5v3h3" fill="#e8d8a8" stroke="#a8883a"/><text x="2" y="12" font-family="Liberation Sans" font-size="9" font-weight="bold" fill="#2b5a9a">c</text><rect x="1.5" y="10" width="1" height="1.3" fill="#2b5a9a"/></svg><div class="t" style="left:273px;top:273px">usb_host_mo...</div>
<svg style="left:396px;top:274px" width="12" height="15" viewBox="0 0 12 15"><path d="M0.5 0.5h8l3 3v11h-11z" fill="#f6f8fc" stroke="#a8883a"/><path d="M8.5 0.5v3h3" fill="#e8d8a8" stroke="#a8883a"/><text x="2" y="12" font-family="Liberation Sans" font-size="9" font-weight="bold" fill="#2b5a9a">c</text><rect x="1.5" y="10" width="1" height="1.3" fill="#2b5a9a"/></svg><div class="t" style="left:413px;top:273px">usb.c</div>
<svg style="left:472px;top:272px" width="16" height="16" viewBox="0 0 16 16"><path d="M0.5 3.5h4l1-2h5v2" fill="#f2d27a" stroke="#b08a2a"/><path d="M2.5 4.5h8l3 3v8h-11z" fill="#f6f8fc" stroke="#a8883a"/><text x="5" y="14" font-family="Liberation Sans" font-size="9" font-weight="bold" fill="#2b5a9a">h</text><rect x="3.5" y="12" width="1" height="1.3" fill="#2b5a9a"/></svg><div class="t" style="left:493px;top:273px">stdint.h</div>
<svg style="left:566px;top:273px" width="14" height="14" viewBox="0 0 14 14"><rect x="0.5" y="0.5" width="13" height="13" fill="#eef3fb" stroke="#4a6da0"/><rect x="0.5" y="0.5" width="13" height="2.5" fill="#7aa3d8"/><text x="3.5" y="11.5" font-family="Liberation Sans" font-size="9" font-weight="bold" fill="#2b5a9a">c</text></svg><div class="t" style="left:585px;top:273px">0x3ff16a</div>
<svg style="left:662px;top:272px" width="16" height="16" viewBox="0 0 16 16"><path d="M0.5 3.5h4l1-2h5v2" fill="#f2d27a" stroke="#b08a2a"/><path d="M2.5 4.5h8l3 3v8h-11z" fill="#f6f8fc" stroke="#a8883a"/><text x="5" y="14" font-family="Liberation Sans" font-size="9" font-weight="bold" fill="#2b5a9a">h</text><rect x="3.5" y="12" width="1" height="1.3" fill="#2b5a9a"/></svg><div class="t" style="left:683px;top:273px">rom_map.h</div>
<svg style="left:777px;top:272px" width="16" height="16" viewBox="0 0 16 16"><path d="M0.5 3.5h4l1-2h5v2" fill="#f2d27a" stroke="#b08a2a"/><path d="M2.5 4.5h8l3 3v8h-11z" fill="#f6f8fc" stroke="#a8883a"/><text x="5" y="14" font-family="Liberation Sans" font-size="9" font-weight="bold" fill="#2b5a9a">h</text><rect x="3.5" y="12" width="1" height="1.3" fill="#2b5a9a"/></svg><div class="t" style="left:798px;top:273px">hw_types.h</div>

<svg style="left:894px;top:272px" width="9" height="7" viewBox="0 0 9 7"><path d="M1 1l2.5 2.5-2.5 2.5M5 1l2.5 2.5-2.5 2.5" stroke="#111" stroke-width="1.5" fill="none"/></svg>
<div class="t" style="left:901px;top:275px;font-size:9.5px;font-family:'Liberation Serif'">1</div>
<div class="a" style="left:975px;top:274px;width:10px;height:4px;border:1px solid #555"></div>
<div class="a" style="left:998px;top:274px;width:10px;height:10px;border:1px solid #555;box-shadow:inset 0 1px 0 #fff,inset 0 2px 0 #555"></div>
<!-- code area -->
<div class="a" style="left:3px;top:292px;width:988px;height:256px;background:#fff"></div>
<div class="a" style="left:47px;top:518px;width:944px;height:15px;background:#e8f2fe"></div>
<!-- magnifier overlay -->
<div class="a" style="left:383px;top:483px;width:30px;height:29px;border-radius:5px;background:#fbe6e6"></div>
<svg style="left:383px;top:483px" width="30" height="29" viewBox="0 0 30 29"><circle cx="13.8" cy="13.4" r="6.6" fill="none" stroke="#fff" stroke-width="1.6"/><path d="M18.5 18.5l4.5 4.5" stroke="#fff" stroke-width="3" stroke-linecap="round"/><path d="M18.5 18.5l4.5 4.5" stroke="#fbe6e6" stroke-width="1" stroke-linecap="round"/></svg>
<div class="a" style="left:4px;top:292px;width:12px;height:256px;background-color:#cfe0f7;background-image:linear-gradient(45deg,#5b9be0 25%,transparent 25%,transparent 75%,#5b9be0 75%),linear-gradient(45deg,#5b9be0 25%,transparent 25%,transparent 75%,#5b9be0 75%);background-size:2px 2px;background-position:0 0,1px 1px"></div>
<div class="a" style="left:44px;top:292px;width:1px;height:256px;background:#f2f2f2"></div>
<div class="t m" style="left:16px;top:293px;color:#787878">1130</div><div class="t m" style="left:16px;top:308px;color:#787878">1131</div><div class="t m" style="left:16px;top:323px;color:#787878">1132</div><div class="t m" style="left:16px;top:338px;color:#787878">1133</div><div class="t m" style="left:16px;top:353px;color:#787878">1134</div><div class="t m" style="left:16px;top:368px;color:#787878">1135</div><div class="t m" style="left:16px;top:383px;color:#787878">1136</div><div class="t m" style="left:16px;top:398px;color:#787878">1137</div><div class="t m" style="left:16px;top:413px;color:#787878">1138</div><div class="t m" style="left:16px;top:428px;color:#787878">1139</div><div class="t m" style="left:16px;top:443px;color:#787878">1140</div><div class="t m" style="left:16px;top:458px;color:#787878">1141</div><div class="t m" style="left:16px;top:473px;color:#787878">1142</div><div class="t m" style="left:16px;top:488px;color:#787878">1143</div><div class="t m" style="left:16px;top:503px;color:#787878">1144</div><div class="t m" style="left:16px;top:518px;color:#787878">1145</div><div class="t m" style="left:16px;top:533px;color:#787878">1146</div>
<div class="t m" style="left:47px;top:293px">        <span style="color:#7f0055;font-weight:bold">if</span>(g_sRootHub.<span style="color:#0000c0">bEnumerationBusy</span> &amp;&amp;</div>
<div class="t m" style="left:47px;top:308px">           (g_sRootHub.<span style="color:#0000c0">ui8EnumIdx</span> != ui8Port))</div>
<div class="t m" style="left:47px;top:323px">        {</div>
<div class="t m" style="left:47px;top:338px">            <span style="color:#7f0055;font-weight:bold">continue</span>;</div>
<div class="t m" style="left:47px;top:353px">        }</div>
<div class="t m" style="left:47px;top:368px"></div>
<div class="t m" style="left:47px;top:383px">        <span style="color:#3f7f5f">//</span></div>
<div class="t m" style="left:47px;top:398px">        <span style="color:#3f7f5f">// Did something change for this particular port?</span></div>
<div class="t m" style="left:47px;top:413px">        <span style="color:#3f7f5f">//</span></div>
<div class="t m" style="left:47px;top:428px">        <span style="color:#7f0055;font-weight:bold">if</span>(g_ui32ChangeFlags &amp; ((<span style="color:#005032">uint32_t</span>)1 &lt;&lt; ui8Port))</div>
<div class="t m" style="left:47px;top:443px">        {</div>
<div class="t m" style="left:47px;top:458px">            <span style="color:#3f7f5f">//</span></div>
<div class="t m" style="left:47px;top:473px">            <span style="color:#3f7f5f">// Yes - query the port status.</span></div>
<div class="t m" style="left:47px;top:488px">            <span style="color:#3f7f5f">//</span></div>
<div class="t m" style="left:47px;top:503px">            bRetcode = HubGetPortStatus(&amp;g_sRootHub, ui8Port,</div>
<div class="t m" style="left:47px;top:518px">                                        &amp;<span style="background:#3399ff;color:#fff">ui16Status</span>, &amp;ui16Changed);</div>
<div class="t m" style="left:47px;top:533px"></div>

<div class="a" style="left:404px;top:518px;width:2px;height:15px;background:#000"></div>
<!-- editor vscroll -->
<div class="sb" style="left:991px;top:292px;width:14px;height:256px;background:#f0f0f0"></div>
<svg style="left:994px;top:300px" width="9" height="5" viewBox="0 0 9 5"><path d="M0.5 4.5l4-4 4 4z" fill="#444"/></svg>
<div class="thumb" style="left:991px;top:469px;width:14px;height:15px;background:linear-gradient(90deg,#f6f6f6 0%,#e9e9e9 45%,#d6d6d6 55%,#c9c9c9 100%)"></div>
<svg style="left:994px;top:537px" width="9" height="5" viewBox="0 0 9 5"><path d="M0.5 0.5l4 4 4-4z" fill="#444"/></svg>
<!-- overview ruler -->
<div class="a" style="left:1005px;top:292px;width:15px;height:273px;background:#f5f5f5;border-left:1px solid #e6e6e6"></div>
<div class="a" style="left:1008px;top:465px;width:9px;height:6px;border:1px solid #f0d8a8;background:#fdf3e0"></div>
<div class="a" style="left:1008px;top:477px;width:9px;height:6px;border:1px solid #c8dcb8;background:#eef5e8"></div>
<div class="a" style="left:1008px;top:483px;width:9px;height:6px;border:1px solid #f0d8a8;background:#fdf3e0"></div>
<div class="a" style="left:1008px;top:489px;width:9px;height:6px;border:1px solid #f0d8a8;background:#fdf3e0"></div>
<!-- editor hscroll -->
<div class="sb" style="left:45px;top:548px;width:960px;height:17px;background:#f0f0f0"></div>
<svg style="left:51px;top:552px" width="5" height="9" viewBox="0 0 5 9"><path d="M4.5 0.5l-4 4 4 4z" fill="#999"/></svg>
<svg style="left:977px;top:552px" width="5" height="9" viewBox="0 0 5 9"><path d="M0.5 0.5l4 4-4 4z" fill="#999"/></svg>
<div class="a" style="left:3px;top:548px;width:42px;height:17px;background:#f5f5f5"></div>

</div>

<!-- CONSOLE PART -->
<div class="part" style="left:2px;top:571px;width:1019px;height:129px">
  <div class="hdr"></div>
  <div class="tab" style="left:0;width:96px"></div>
</div>
<div id="console">
<svg style="left:8px;top:578px" width="15" height="15" viewBox="0 0 15 15"><rect x="1" y="1" width="13" height="10" rx="1.5" fill="#eef4fc" stroke="#2f6db5" stroke-width="1.8"/><path d="M4 5h7M4 8h5" stroke="#2f6db5" stroke-width="1.2"/><path d="M4 13.5h7" stroke="#2f6db5" stroke-width="1.5"/><path d="M7.5 11v2" stroke="#2f6db5" stroke-width="1.5"/></svg>
<div class="t" style="left:27px;top:578px">Console</div>
<svg style="left:81px;top:580px" width="11" height="11" viewBox="0 0 11 11"><path d="M1 1l3 0 1.5 2 1.5-2h3v1l-2 3.5 2 3.5v1h-3l-1.5-2-1.5 2h-3v-1l2-3.5-2-3.5z" fill="#fff" stroke="#777" stroke-width="1"/></svg>
<!-- console toolbar -->
<svg style="left:792px;top:576px" width="17" height="16" viewBox="0 0 17 16"><path d="M0.5 0.5h8l3 3v11h-11z" fill="#f4f4f4" stroke="#999"/><path d="M2 5h6M2 7.5h6M2 10h5" stroke="#aaa"/><path d="M10 9l5 5M15 9l-5 5" stroke="#777" stroke-width="1.8"/></svg>
<svg style="left:816px;top:576px" width="17" height="17" viewBox="0 0 17 17"><rect x="6.5" y="0.5" width="10" height="15" fill="#fff" stroke="#999"/><path d="M8 4h7M8 7h7M8 10h7" stroke="#7a9ccc" stroke-width="1.2"/><rect x="1.5" y="9.5" width="6" height="6" fill="#e7b634" stroke="#9a7318"/><path d="M2.5 9.5v-2a2 2 0 0 1 4 0v2" fill="none" stroke="#777" stroke-width="1.2"/></svg>
<svg style="left:840px;top:576px" width="17" height="16" viewBox="0 0 17 16"><rect x="0.5" y="0.5" width="11" height="14" fill="#f2f2f2" stroke="#aaa"/><path d="M2 4h7M2 7h7M2 10h7" stroke="#bbb"/><path d="M9 6h6v6h-5M12 10l-2 2 2 2" stroke="#d6a642" stroke-width="1.5" fill="none"/></svg>
<div class="a" style="left:860px;top:576px;width:1px;height:18px;background:#999"></div>
<svg style="left:869px;top:576px" width="17" height="17" viewBox="0 0 17 17"><rect x="0.5" y="4.5" width="13" height="11" fill="#e9f0fa" stroke="#4a6da0"/><rect x="0.5" y="4.5" width="13" height="3" fill="#7aa3d8"/><path d="M7 11l6-6" stroke="#3a8a3a" stroke-width="1.6"/><circle cx="13" cy="4" r="2.5" fill="#3aa83a"/></svg>
<svg style="left:894px;top:576px" width="15" height="15" viewBox="0 0 15 15"><rect x="1" y="1" width="13" height="10" rx="1.5" fill="#eef4fc" stroke="#2f6db5" stroke-width="1.8"/><path d="M4 5h7M4 8h5" stroke="#2f6db5" stroke-width="1.2"/><path d="M4 13.5h7" stroke="#2f6db5" stroke-width="1.5"/><path d="M7.5 11v2" stroke="#2f6db5" stroke-width="1.5"/></svg>
<svg style="left:917px;top:582px" width="7" height="4" viewBox="0 0 7 4"><path d="M0 0h7l-3.5 4z" fill="#222"/></svg>
<svg style="left:933px;top:575px" width="17" height="17" viewBox="0 0 17 17"><rect x="0.5" y="4.5" width="13" height="11" fill="#fffbe8" stroke="#a88a30"/><rect x="0.5" y="4.5" width="13" height="3" fill="#7aa3d8"/><path d="M12 1v6M9 4h6" stroke="#e0a820" stroke-width="1.6"/></svg>
<svg style="left:957px;top:582px" width="7" height="4" viewBox="0 0 7 4"><path d="M0 0h7l-3.5 4z" fill="#222"/></svg>
<div class="a" style="left:975px;top:580px;width:10px;height:4px;border:1px solid #555"></div>
<div class="a" style="left:997px;top:580px;width:10px;height:10px;border:1px solid #555;box-shadow:inset 0 1px 0 #fff,inset 0 2px 0 #555"></div>
<!-- console label -->
<div class="t" style="left:4px;top:599px;letter-spacing:-.18px">TMS320F28377D.ccxml</div>
<div class="a" style="left:3px;top:614px;width:1017px;height:1px;background:#d0d0d0"></div>
<div class="a" style="left:3px;top:615px;width:1017px;height:1px;background:#a0a0a0"></div>
<div class="a" style="left:0;top:0;width:1366px;height:728px;clip-path:inset(616px 363px 46px 3px)">
<div class="t m" style="left:6px;top:618px">C28xx_CPU1: GEL Output:</div>
<div class="t m" style="left:6px;top:633px">Memory Map Initialization Complete</div>
<div class="t m" style="left:6px;top:648px">C28xx_CPU1: If erase/program (E/P) operation is being done on one core, the other core should not execute from shared-RAM (SR) as they are used for the Flash API.</div>
</div>
<!-- console vscroll -->
<div class="sb" style="left:1003px;top:616px;width:17px;height:65px;background:#f0f0f0"></div>
<svg style="left:1007px;top:622px" width="9" height="5" viewBox="0 0 9 5"><path d="M0.5 4.5l4-4 4 4z" fill="#888"/></svg>
<svg style="left:1007px;top:669px" width="9" height="5" viewBox="0 0 9 5"><path d="M0.5 0.5l4 4 4-4z" fill="#888"/></svg>
<!-- console hscroll -->
<div class="sb" style="left:3px;top:681px;width:1017px;height:17px;background:#f0f0f0"></div>
<svg style="left:10px;top:685px" width="5" height="9" viewBox="0 0 5 9"><path d="M4.5 0.5l-4 4 4 4z" fill="#444"/></svg>
<div class="thumb" style="left:22px;top:682px;width:342px;height:15px"></div>
<div class="a" style="left:190px;top:686px;width:1px;height:7px;background:#555;box-shadow:2px 0 0 #555,4px 0 0 #555"></div>
<svg style="left:992px;top:685px" width="5" height="9" viewBox="0 0 5 9"><path d="M0.5 0.5l4 4-4 4z" fill="#444"/></svg>
</div>

<!-- STATUS BAR -->
<div class="a" style="left:0;top:700px;width:1366px;height:28px;background:#e6e6e6"></div>
<div id="status">
<div class="a" style="left:672px;top:702px;width:1px;height:24px;background:#b0b0b0;box-shadow:1px 0 0 #fafafa"></div>
<div class="a" style="left:776px;top:702px;width:1px;height:24px;background:#b0b0b0;box-shadow:1px 0 0 #fafafa"></div>
<div class="a" style="left:874px;top:702px;width:1px;height:24px;background:#b0b0b0;box-shadow:1px 0 0 #fafafa"></div>
<div class="t" style="left:680px;top:705px">Writable</div>
<div class="t" style="left:784px;top:705px;letter-spacing:.27px">Smart Insert</div>
<div class="t" style="left:882px;top:705px">1145 : 52</div>
<div class="a" style="left:972px;top:702px;width:30px;height:22px;border-right:2px solid #8c8c8c;border-bottom:2px solid #8c8c8c;box-shadow:inset 1px 1px 0 #dcdcdc"></div>
<svg style="left:975px;top:704px" width="18" height="18" viewBox="0 0 18 18"><rect x="9" y="5.5" width="6.5" height="8" fill="#fdfeff" stroke="#6f95cc" stroke-width="1.6"/><path d="M10 15h4" stroke="#6f95cc" stroke-width="1.4"/><circle cx="5.5" cy="12" r="3.8" fill="#eef0c8" stroke="#7a9ad0" stroke-width="1"/><circle cx="5.5" cy="12" r="1" fill="#fff" stroke="#7a9ad0" stroke-width=".7"/><path d="M1.5 9c0-3 2-4.5 5-4.5h1.5v-2.5l3.5 3.5-3.5 3.5v-2.5h-1.5c-2 0-3 1-3.5 2.5z" fill="#f0c040" stroke="#b08018" stroke-width=".7"/></svg>
<div class="a" style="left:1004px;top:707px;width:2px;height:2px;background:#b0a890;box-shadow:0 4px 0 #b0a890,0 8px 0 #b0a890,0 12px 0 #b0a890"></div>
<div class="a" style="left:1294px;top:707px;width:2px;height:2px;background:#b0a890;box-shadow:0 4px 0 #b0a890,0 8px 0 #b0a890,0 12px 0 #b0a890"></div>
<div class="a" style="left:1314px;top:707px;width:2px;height:2px;background:#b0a890;box-shadow:0 4px 0 #b0a890,0 8px 0 #b0a890,0 12px 0 #b0a890"></div>
</div>

</body></html>
